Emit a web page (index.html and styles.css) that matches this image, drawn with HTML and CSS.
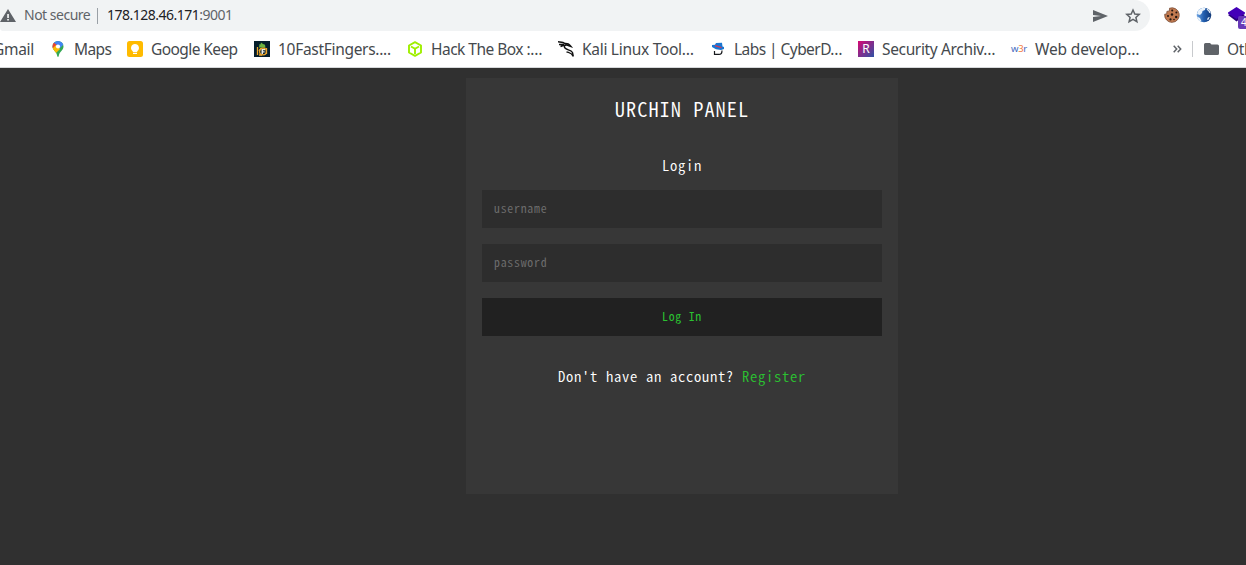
FILE: index.html
```html
<!DOCTYPE html>
<html lang="en">
<head>
<meta charset="utf-8">
<title>Urchin Panel</title>
<link rel="stylesheet" href="styles.css">
</head>
<body>
<header class="toolbar">
  <div class="address">
    <svg class="warn" width="16" height="14" viewBox="0 0 16 14"><path fill="#5f6368" fill-rule="evenodd" d="M8 0l8 13H0zM7.200 5v4h1.700V5zm0 5v1.600h1.700V10z"/></svg>
    <span class="insecure">Not secure</span>
    <span class="divider"></span>
    <span class="host">178.128.46.171</span><span class="port">:9001</span>
    <svg class="send" width="15" height="12" viewBox="0 0 15 12"><path fill="#5f6368" d="M0 0l15 6L0 12V7l8-1-8-1z"/></svg>
    <svg class="star" width="16" height="16" viewBox="0 0 16 16"><path fill="none" stroke="#5f6368" stroke-width="1.500" d="M8 2l1.800 4 4.400.4-3.300 3 1 4.300L8 11.400l-3.900 2.300 1-4.300-3.300-3L6.200 6z"/></svg>
  </div>
  <div class="extensions">
    <svg width="16" height="16" viewBox="0 0 16 16"><path fill="#c17a50" stroke="#6c3f29" stroke-width=".7" d="M5.500 1.200A7.300 7.300 0 1 1 .7 7.200l2-.3.2-2.500 2.500-.5z"/><g fill="#211611"><circle cx="8.200" cy="3.400" r="1"/><circle cx="12.400" cy="5.600" r="1"/><circle cx="8" cy="7.500" r="1.200"/><circle cx="4" cy="9" r="1"/><circle cx="12.200" cy="10" r="1.200"/><circle cx="6.500" cy="12.400" r="1.100"/><circle cx="10" cy="12.500" r=".8"/></g></svg>
    <svg class="globe" width="16" height="16" viewBox="0 0 16 16"><defs><linearGradient id="sea" x1="0" x2="1"><stop stop-color="#6ca3e2"/><stop offset=".5" stop-color="#205cac"/><stop offset="1" stop-color="#113877"/></linearGradient></defs><circle cx="8" cy="8" r="7.300" fill="url(#sea)"/><path fill="#eaf3fb" d="M2.500 3l4-2.200 3 .2-.5 2-2.500 1L6 6 4 8 1 7zM11 1.500l2.500 2 1.400 3-1.700-.8-1-2-1.500-.7zM1 9.500l3 1.500 1.500 3.200-2-.2L1.500 11.500zM12 10.500l1.800-.5-1.600 3-1.200-.5z"/></svg>
    <span class="stack"><svg width="17" height="17" viewBox="0 0 17 17"><path fill="#2b007b" d="M0 8l2-1h13l2 1-8.500 6.500z"/><path fill="#4300b8" d="M8.500 0L17 5.500v1L8.500 12 0 6.500v-1z"/></svg><b class="badge">4</b></span>
  </div>
</header>
<nav class="bookmarks">
  <a class="mark gmail"><span>Gmail</span></a>
  <a class="mark maps"><svg width="16" height="16" viewBox="0 0 16 16"><defs><clipPath id="pin"><path d="M8 0a5.500 5.500 0 0 1 5.500 5.500C13.500 9.500 9.500 10 8.700 15.300Q8 16.500 7.300 15.300C6.500 10 2.500 9.500 2.500 5.500A5.500 5.500 0 0 1 8 0z"/></clipPath></defs><g clip-path="url(#pin)"><path fill="#34a853" d="M0 0h16v16H0z"/><path fill="#4285f4" d="M3 0h11v3L8 9 5 4z"/><path fill="#ea4335" d="M0 0l4 1.700L7 4 3 8 0 6z"/><path fill="#fbbc04" d="M2 8l4-4 4 4-5 5z"/></g><circle cx="8" cy="5.500" r="2.100" fill="#fff"/></svg><span>Maps</span></a>
  <a class="mark keep"><svg width="16" height="16" viewBox="0 0 16 16"><rect width="16" height="16" rx="2.500" fill="#fb0"/><path fill="#fff" d="M8 3a4 4 0 0 1 2.200 7.300V11H5.800v-.7A4 4 0 0 1 8 3zM6 11.700h4V13H6z"/></svg><span>Google Keep</span></a>
  <a class="mark fingers"><svg width="16" height="16" viewBox="0 0 16 16"><path fill="#061e2b" d="M0 0h16v16H0z"/><path fill="#6db33f" d="M5 6.500l.5-3.500 1 .4L7 1.500l1.300 1L9 3l2 .8.500 3z"/><path fill="none" stroke="#eda52a" stroke-width="1.300" d="M3.500 6v8M5 10l2-2.500M5 14h3m4.500-7v6"/><circle cx="9" cy="10.500" r="3.400" fill="none" stroke="#eda52a" stroke-width="1.300"/><path fill="#ebe9df" d="M7.500 8h3.500v1.300H9v1h1.600v1.200H9V13H7.500z"/></svg><span>10FastFingers....</span></a>
  <a class="mark htb"><svg width="16" height="16" viewBox="0 0 16 16"><path fill="none" stroke="#9fef00" stroke-width="1.900" stroke-linejoin="round" d="M8 1.200l6 3.300v7l-6 3.300-6-3.300v-7zM4 5.500l4 2.300 4-2.300M8 8v5"/></svg><span>Hack The Box :…</span></a>
  <a class="mark kali"><svg width="16" height="16" viewBox="0 0 16 16"><path fill="none" stroke="#111" stroke-width="1.400" d="M0 .8l5 .7 3 1.700M1 3.500h5M2.500 5.500l4-1.500M6 2.500C10 2 11 3 13 5.500l-2-.7C7 3 5.500 5 7 7c1.600 2.200 6 1.500 7.500 4.500l.8 4C13.500 11.500 12 12 8.500 10.800"/></svg><span>Kali Linux Tool…</span></a>
  <a class="mark labs"><svg width="16" height="16" viewBox="0 0 16 16"><path fill="#1976d2" d="M2 4l3-.2L6 2l6-.2L12.500 5.500l1.500.5v2l-3 1-5-.8L2 6z"/><path fill="#dc3550" d="M5 4l6.500 2v1.200L5 5.300z"/><path fill="none" stroke="#17191d" stroke-width="1.200" d="M4.500 10v3.400h4.500q3 0 3-4"/></svg><span>Labs | CyberD…</span></a>
  <a class="mark sec"><i class="r-icon">R</i><span>Security Archiv…</span></a>
  <a class="mark web"><i class="w-icon">w<em>3</em>r</i><span>Web develop…</span></a>
  <svg class="more" width="9" height="8" viewBox="0 0 9 8"><path fill="none" stroke="#5f6368" stroke-width="1.500" d="M.7.800L3.700 4 .7 7.200M4.700.800l3 3.200-3 3.200"/></svg>
  <span class="divider bar"></span>
  <svg class="folder" width="15" height="12" viewBox="0 0 15 12"><path fill="#5f6368" d="M1.500 0H6l1.500 1.500h6Q15 1.500 15 3v7.500Q15 12 13.500 12h-12Q0 12 0 10.500v-9Q0 0 1.500 0z"/></svg>
  <span class="other">Other bookmarks</span>
</nav>
<main class="page">
  <form class="panel">
    <h1 class="title">URCHIN PANEL</h1>
    <h2 class="subtitle">Login</h2>
    <input class="field" type="text" placeholder="username">
    <input class="field" type="password" placeholder="password">
    <button class="submit" type="button">Log In</button>
    <p class="signup">Don't have an account? <a class="register">Register</a></p>
  </form>
</main>
</body>
</html>
```
FILE: styles.css
```css
* { box-sizing: border-box; }
body { margin: 0; width: 1246px; height: 565px; overflow: hidden; display: flex; flex-direction: column; background: #303030; font-family: "Noto Sans", sans-serif; }
svg { display: block; flex: none; }
.toolbar { height: 31px; display: flex; background: #fff; flex: none; }
.address { width: 1150px; height: 31px; display: flex; align-items: center; background: #f1f3f4; border-radius: 0 16px 16px 4px; font-size: 14px; line-height: 18px; letter-spacing: -.5px; white-space: nowrap; padding-right: 10px; }
.address span { padding-bottom: 1px; }
.warn { margin-right: 8px; }
.insecure { color: #5f6368; width: 73px; }
.divider { width: 1px; height: 16px; background: #9aa0a6; margin-right: 9px; flex: none; }
.host { color: #202124; }
.port { color: #5f6368; }
.send { margin-left: auto; margin-right: 18px; }
.star { margin-right: -1px; }
.address .send { position: relative; left: 1px; }
.extensions { display: flex; align-items: center; padding: 0 0 1px 14px; width: 96px; flex: none; }
.globe { margin-left: 16px; }
.stack { position: relative; margin-left: 16px; }
.badge { position: absolute; left: 10px; top: 9px; width: 16px; height: 13px; border-radius: 2px; background: #673ab7; color: #fff; font: 10px/13px "Noto Sans", sans-serif; padding-left: 3px; }
.bookmarks { height: 37px; flex: none; display: flex; align-items: center; background: #fff; border-bottom: 1px solid #d6d8da; font-size: 15.500px; line-height: 20px; color: #45494d; white-space: nowrap; overflow: hidden; }
.mark { display: flex; align-items: center; gap: 8px; flex: none; }
.mark span, .other { padding-bottom: 1px; }
.gmail { width: 50px; letter-spacing: -.3px; }
.gmail span { margin-left: -7px; }
.maps { width: 77px; letter-spacing: -.6px; }
.keep { width: 127px; letter-spacing: -.58px; }
.fingers { width: 153px; letter-spacing: -.3px; }
.htb { width: 151px; letter-spacing: -.52px; }
.kali { width: 152px; letter-spacing: -.29px; }
.labs { width: 148px; letter-spacing: -.55px; }
.sec { width: 153px; letter-spacing: -.35px; }
.web { width: 162px; letter-spacing: -.15px; }
.r-icon { width: 16px; height: 16px; background: linear-gradient(135deg, #d80873, #2d52a5); color: #fff; font: 12px/16px "Noto Sans", sans-serif; letter-spacing: 0; text-align: center; }
.w-icon { width: 16px; color: #3f68bd; font: 9.500px/16px "Noto Sans", sans-serif; letter-spacing: -.3px; }
.w-icon em { color: #f27a40; font-style: normal; }
.bar { margin: 0 11px 0 10px; background: #c8cacd; }
.folder { margin-right: 8px; }
.other { letter-spacing: -.3px; }
.page { flex: 1; padding: 10px 0 0 466px; }
.panel { width: 432px; height: 416px; padding: 14px 16px; background: #373737; display: flex; flex-direction: column; font-family: "Noto Sans CJK JP", monospace; font-feature-settings: "hwid"; color: #fff; }
.title { margin: 0; font-size: 20.400px; line-height: 32px; letter-spacing: 1px; font-weight: 350; text-align: center; }
.subtitle { margin: 29px 0 13px; font-size: 14.600px; line-height: 24px; letter-spacing: .7px; font-weight: 350; text-align: center; }
.field, .submit { height: 38px; margin: 0 0 16px; padding: 0 12px 3px; border: 0; border-radius: 0; background: #2d2d2d; color: #fff; font-family: inherit; font-feature-settings: inherit; font-size: 11.800px; letter-spacing: .767px; }
.field::placeholder { color: #6c6c6c; }
.submit { background: #212121; color: #2bc131; }
.signup { margin: 12px 0 0; font-size: 14.600px; line-height: 24px; letter-spacing: .7px; font-weight: 350; text-align: center; }
.register { color: #2bc131; }
```
